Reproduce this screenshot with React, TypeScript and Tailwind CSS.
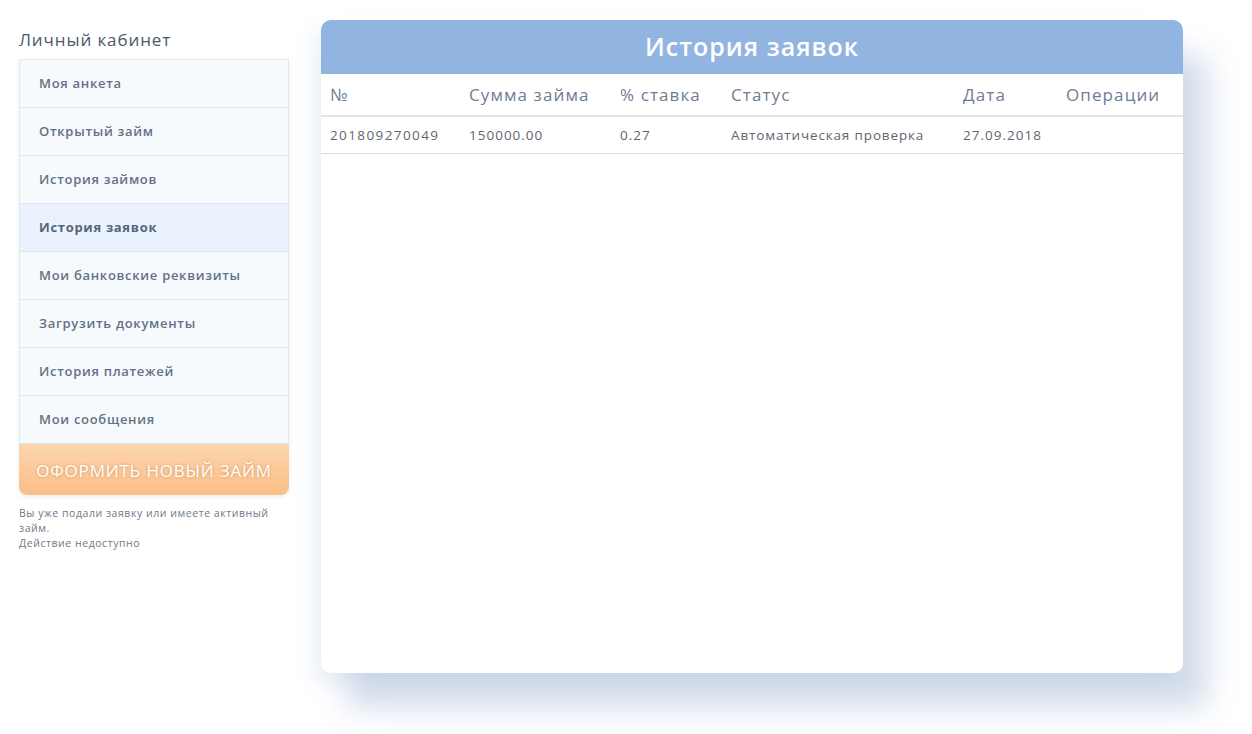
import React from "react";

const menu = [
  "Моя анкета",
  "Открытый займ",
  "История займов",
  "История заявок",
  "Мои банковские реквизиты",
  "Загрузить документы",
  "История платежей",
  "Мои сообщения",
];

const active = "История заявок";

const rows = [
  {
    id: "201809270049",
    sum: "150000.00",
    rate: "0.27",
    status: "Автоматическая проверка",
    date: "27.09.2018",
  },
];

function Sidebar() {
  return (
    <aside className="w-[270px] shrink-0 pt-[30px]">
      <h2 className="text-[17px] leading-5 text-[#4b586b] mb-[9px] tracking-[0.9px]">Личный кабинет</h2>
      <div className="rounded-b-[8px] shadow-[0_2px_4px_rgba(200,210,225,0.4)]">
        <ul className="border border-[#e3eaf2] border-b-0 bg-[#f7fafd]">
          {menu.map((item) => (
            <li
              key={item}
              className={`h-12 flex items-center px-[19px] border-b border-[#dce6f0] text-[13px] tracking-[0.7px] ${
                item === active ? "bg-[#eaf3fd] text-[#56657a] font-bold" : "text-[#637185] font-semibold"
              }`}
            >
              {item}
            </li>
          ))}
        </ul>
        <button className="w-full h-[51px] pt-[3px] rounded-b-[8px] bg-gradient-to-b from-[#fdd6ae] to-[#fbbd86] text-white text-[17px] tracking-[0.8px] [text-shadow:0_0_3px_rgba(170,110,60,0.6)]">
          ОФОРМИТЬ НОВЫЙ ЗАЙМ
        </button>
      </div>
      <p className="mt-[11px] text-[10.5px] leading-[15px] text-[#6f7a88] tracking-[0.55px]">
        Вы уже подали заявку или имеете активный займ.
        <br />
        Действие недоступно
      </p>
    </aside>
  );
}

function RequestsTable() {
  return (
    <section className="w-[862px] h-[653px] mt-5 bg-white rounded-[10px] overflow-hidden shadow-[25px_35px_30px_rgba(160,180,210,0.45),-8px_10px_20px_rgba(200,215,235,0.35)]">
      <div className="h-[54px] bg-[#92b4e0] flex items-center justify-center">
        <h1 className="text-white text-[25px] font-semibold tracking-[1px]">История заявок</h1>
      </div>
      <table className="w-full text-left border-collapse">
        <thead>
          <tr className="h-[42px] border-b-2 border-[#e4e4e4] text-[17px] tracking-[1.1px] text-[#6e7d93]">
            <th className="font-normal pl-[9px] w-[148px]">№</th>
            <th className="font-normal w-[151px]">Сумма займа</th>
            <th className="font-normal w-[111px]">% ставка</th>
            <th className="font-normal w-[232px]">Статус</th>
            <th className="font-normal w-[103px]">Дата</th>
            <th className="font-normal">Операции</th>
          </tr>
        </thead>
        <tbody>
          {rows.map((r) => (
            <tr key={r.id} className="h-[37px] border-b border-[#dcdcdc] text-[13.5px] tracking-[1px] text-[#5f6670]">
              <td className="pl-[9px] tracking-[1.4px]">{r.id}</td>
              <td>{r.sum}</td>
              <td>{r.rate}</td>
              <td className="tracking-[0.85px]">{r.status}</td>
              <td>{r.date}</td>
              <td></td>
            </tr>
          ))}
        </tbody>
      </table>
    </section>
  );
}

export default function App() {
  return (
    <div className="min-h-[734px] bg-white flex gap-[32px] pl-[19px] font-['Open_Sans',sans-serif]">
      <Sidebar />
      <RequestsTable />
    </div>
  );
}
